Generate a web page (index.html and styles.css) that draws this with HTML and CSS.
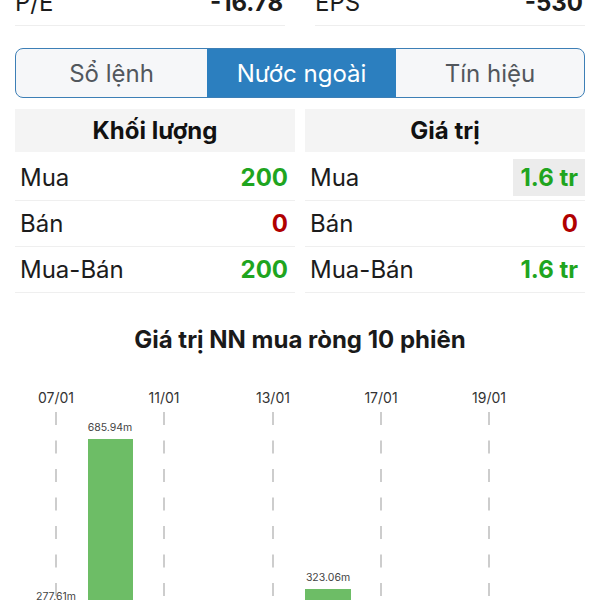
FILE: index.html
```html
<!DOCTYPE html>
<html lang="vi">
<head>
    <meta charset="UTF-8">
    <meta name="viewport" content="width=device-width, initial-scale=1.0">
    <title>Nước ngoài</title>
    <link rel="stylesheet" href="styles.css">
</head>
<body>
    <div class="screen">
        <div class="stats">
            <div class="stat"><span class="stat-label">P/E</span><span class="stat-value">-16.78</span></div>
            <div class="stat"><span class="stat-label">EPS</span><span class="stat-value">-530</span></div>
        </div>

        <div class="tabs">
            <div class="tab">Sổ lệnh</div>
            <div class="tab active">Nước ngoài</div>
            <div class="tab">Tín hiệu</div>
        </div>

        <div class="panels">
            <div class="panel">
                <div class="panel-head">Khối lượng</div>
                <div class="row"><span>Mua</span><span class="val up">200</span></div>
                <div class="row"><span>Bán</span><span class="val down">0</span></div>
                <div class="row"><span>Mua-Bán</span><span class="val up">200</span></div>
            </div>
            <div class="panel">
                <div class="panel-head">Giá trị</div>
                <div class="row"><span>Mua</span><span class="val up flash">1.6 tr</span></div>
                <div class="row"><span>Bán</span><span class="val down">0</span></div>
                <div class="row"><span>Mua-Bán</span><span class="val up">1.6 tr</span></div>
            </div>
        </div>

        <h2 class="chart-title">Giá trị NN mua ròng 10 phiên</h2>

        <!-- biểu đồ 10 phiên -->
        <svg class="chart" width="600" height="240" viewBox="0 0 600 240">
            <g class="grid">
                <line x1="56" y1="37" x2="56" y2="240"/>
                <line x1="164" y1="37" x2="164" y2="240"/>
                <line x1="273" y1="37" x2="273" y2="240"/>
                <line x1="381" y1="37" x2="381" y2="240"/>
                <line x1="489" y1="37" x2="489" y2="240"/>
            </g>
            <g class="dates">
                <text x="56" y="28">07/01</text>
                <text x="164" y="28">11/01</text>
                <text x="273" y="28">13/01</text>
                <text x="381" y="28">17/01</text>
                <text x="489" y="28">19/01</text>
            </g>
            <g class="bars">
                <rect x="33" y="233" width="46" height="20"/>
                <rect x="88" y="64" width="45" height="190"/>
                <rect x="305" y="214" width="46" height="40"/>
            </g>
            <g class="bar-labels">
                <text x="56" y="225">277.61m</text>
                <text x="110" y="56">685.94m</text>
                <text x="328" y="206">323.06m</text>
            </g>
        </svg>
    </div>
</body>
</html>
```

FILE: styles.css
```css
body {
    margin: 0;
    background: #fff;
    font-family: Inter, "Noto Sans", sans-serif;
    color: #1c1c1c;
    overflow: hidden;
}
.screen {
    padding: 0 15px;
    margin-top: -20px;
}
.stats {
    display: grid;
    grid-template-columns: 1fr 1fr;
    gap: 30px;
}
.stat {
    height: 45px;
    display: flex;
    align-items: center;
    justify-content: space-between;
    border-bottom: 1px solid #eeeeee;
    font-size: 24px;
}
.stat-value {
    font-weight: 700;
    padding-right: 2px;
}
.tabs {
    margin-top: 22px;
    height: 48px;
    display: grid;
    grid-template-columns: 191px 189px 1fr;
    border: 1.5px solid #3d7fb6;
    border-radius: 8px;
    overflow: hidden;
    background: #f6f7f9;
}
.tab {
    display: flex;
    align-items: center;
    justify-content: center;
    font-size: 24px;
    color: #52575d;
}
.tab.active {
    background: #2c7fbf;
    color: #fff;
}
.panels {
    margin-top: 11px;
    display: grid;
    grid-template-columns: 1fr 1fr;
    gap: 10px;
}
.panel-head {
    height: 43px;
    margin-bottom: 3px;
    display: flex;
    align-items: center;
    justify-content: center;
    background: #f4f4f4;
    font-size: 24px;
    font-weight: 700;
    color: #111;
}
.row {
    height: 45px;
    display: flex;
    align-items: center;
    justify-content: space-between;
    padding: 0 7px 0 5px;
    border-bottom: 1px solid #efefef;
    font-size: 24px;
}
.val {
    font-weight: 700;
}
.up {
    color: #1fa51f;
}
.down {
    color: #b00000;
}
.flash {
    background: #ececec;
    height: 37px;
    line-height: 37px;
    padding: 0 7px 0 8px;
    margin-right: -7px;
}
.chart-title {
    margin: 33px 0 0;
    line-height: 28px;
    font-size: 24px;
    font-weight: 700;
    text-align: center;
    color: #1a1a1a;
}
.chart {
    display: block;
    margin: 21px 0 0 -15px;
}
.grid line {
    stroke: #bdbdbd;
    stroke-width: 1.5;
    stroke-dasharray: 13 15.5;
}
.dates text {
    font-family: Inter, sans-serif;
    font-size: 14px;
    fill: #333;
    text-anchor: middle;
}
.bars rect {
    fill: #6dbd66;
}
.bar-labels text {
    font-family: Inter, sans-serif;
    font-size: 10.5px;
    fill: #444;
    text-anchor: middle;
}
```
